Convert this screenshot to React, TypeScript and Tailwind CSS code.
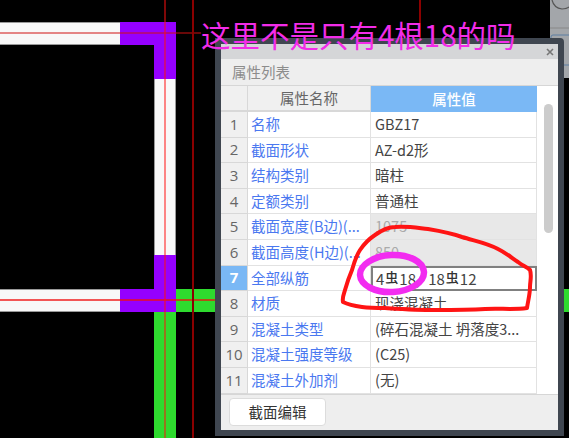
const rows = [
  { name: "名称", value: "GBZ17" },
  { name: "截面形状", value: "AZ-d2形" },
  { name: "结构类别", value: "暗柱" },
  { name: "定额类别", value: "普通柱" },
  { name: "截面宽度(B边)(...", value: "1075", muted: true },
  { name: "截面高度(H边)(...", value: "850", muted: true },
  { name: "全部纵筋", value: "", active: true },
  { name: "材质", value: "现浇混凝土" },
  { name: "混凝土类型", value: "(碎石混凝土 坍落度3..." },
  { name: "混凝土强度等级", value: "(C25)" },
  { name: "混凝土外加剂", value: "(无)" },
];

function Rebar() {
  return <span className="text-[13px] font-medium align-[3px] mx-px text-[#333]">虫</span>;
}

function Canvas() {
  return (
    <>
      {/* walls */}
      <div className="absolute inset-0 grid grid-cols-[120px_34px_22px_40px] grid-rows-[22px_23px_34px_176px_34px_23px_1fr]">
        <div className="col-start-1 row-start-2 bg-[#f8f8f8] border-y border-[#999]" />
        <div className="col-start-2 col-span-2 row-start-2 bg-[#9500ff]" />
        <div className="col-start-3 row-start-3 bg-[#9500ff]" />
        <div className="col-start-3 row-start-4 bg-[#f8f8f8] border-x border-[#999]" />
        <div className="col-start-3 row-start-5 bg-[#9500ff]" />
        <div className="col-start-1 row-start-6 bg-[#f8f8f8] border-y border-[#999]" />
        <div className="col-start-2 col-span-2 row-start-6 bg-[#9500ff]" />
        <div className="col-start-4 row-start-6 bg-[#2edb2e]" />
        <div className="col-start-3 row-start-7 bg-[#2edb2e]" />
      </div>
      <div className="absolute left-[564px] top-[289px] w-[5px] h-[23px] bg-[#2edb2e]" />

      {/* axis lines */}
      <div className="absolute left-0 top-[32px] w-[201px] h-[2px] bg-[#d01010]/50" />
      <div className="absolute left-0 top-[299px] w-[216px] h-[2px] bg-[#f01010]/70" />
      <div className="absolute left-[164px] top-0 w-[2px] h-[438px] bg-[#ff1010]/50" />
      <div className="absolute left-[192px] top-0 w-[2px] h-[438px] bg-[#8b0000]" />
      <div className="absolute left-[419px] top-0 w-[2px] h-[38px] bg-[#8b0000]" />

      {/* corner of the toolbar behind the dialog */}
      <div className="absolute left-[550px] top-0 w-[19px] h-[78px] bg-[#a3a6aa] overflow-hidden">
        <svg width="19" height="78" viewBox="0 0 19 78" fill="none">
          <path d="M2 0 Q4 8 12 9 Q17 9 19 7" stroke="#555" strokeWidth="1.2" />
          <path d="M0 28 H19" stroke="#888" strokeWidth="1" />
          <rect x="1" y="35" width="22" height="30" rx="2" stroke="#5d7ea3" strokeWidth="1" />
        </svg>
      </div>
    </>
  );
}

function PropertyDialog() {
  return (
    <div className="absolute left-[215px] top-[38px] w-[349px] h-[398px] border-[6px] border-[#3f4650] rounded-tr-sm flex flex-col bg-[#eeeeee] font-['Noto_Sans_CJK_SC',sans-serif]">
      <div className="h-[15px] bg-[#d5d6d8] flex items-center justify-end pr-[4px]">
        <svg width="8" height="8" viewBox="0 0 8 8" className="mt-[1px]">
          <path d="M1 1 L7 7 M7 1 L1 7" stroke="#777" strokeWidth="1.6" />
        </svg>
      </div>
      <div className="h-[26px] flex items-center pl-[11px] text-[14.5px] text-[#8c8c8c]">属性列表</div>

      <div className="bg-white border-y border-[#d6d6d6] flex">
        <div className="w-[316px]">
          <div className="grid grid-cols-[27px_123px_166px] h-[26px] text-[14.5px]">
            <div className="bg-[#f0f0f0] border-r border-b-2 border-[#d8d8d8]" />
            <div className="bg-[#f0f0f0] border-r border-b-2 border-[#d8d8d8] flex items-center justify-center text-[#666]">属性名称</div>
            <div className="bg-[#7ab8f5] flex items-center justify-center text-white font-medium">属性值</div>
          </div>
          {rows.map((row, i) => (
            <div key={row.name} className="grid grid-cols-[27px_123px_166px] h-[25.6px] text-[14.5px] leading-none">
              <div className={`border-r border-b border-[#d8d8d8] flex items-center justify-center text-[15px] font-['Open_Sans',sans-serif] ${row.active ? "bg-[#7ab8f5] text-white font-bold" : "bg-[#f0f0f0] text-[#666]"}`}>
                {i + 1}
              </div>
              <div className="border-r border-b border-[#e2e2e2] flex items-center pl-[3px] text-[#4a78f0] whitespace-nowrap overflow-hidden">
                {row.name}
              </div>
              {row.active ? (
                <div className="border-2 border-[#808080] flex items-center pl-[3px] text-[15px] text-[#444] whitespace-nowrap">
                  <span>4<Rebar />18,</span>
                  <span className="ml-[8px]">18<Rebar />12</span>
                </div>
              ) : (
                <div className={`border-r border-b border-[#e2e2e2] flex items-center pl-[4px] whitespace-nowrap overflow-hidden ${row.muted ? "bg-[#e8e8e8] text-[#aaaaaa]" : "text-[#444]"}`}>
                  {row.value}
                </div>
              )}
            </div>
          ))}
        </div>
        <div className="flex-1 pt-[18px] pl-[7px]">
          <div className="w-[9px] h-[129px] rounded-full bg-[#cccccc]" />
        </div>
      </div>

      <div className="flex-1 flex items-center pl-[8px]">
        <button className="w-[97px] h-[28px] bg-white border border-[#dcdcdc] rounded text-[14.5px] text-[#333]">截面编辑</button>
      </div>
    </div>
  );
}

export default function App() {
  return (
    <div className="relative w-[569px] h-[438px] overflow-hidden bg-black">
      <Canvas />
      <PropertyDialog />

      {/* hand drawn marks on top of the screenshot */}
      <svg className="absolute left-0 top-0" width="569" height="438" viewBox="0 0 569 438" fill="none">
        <path
          d="M375 235 C382 230 388 227 395 227 C408 226 418 228 428 229 C440 231 451 233 462 237 C475 241 487 243 498 249 C506 253 512 258 518 262 C523 266 527 267 530 270 C532 276 530 281 530 287 C530 294 528 301 527 308 C513 310 499 308 485 309 C468 310 452 310 435 310 C418 310 402 309 385 308 C377 308 370 308 362 307 C355 306 349 305 343 302 C342 297 344 294 345 290 C347 283 349 277 352 270 C354 263 356 256 360 250 C364 244 369 239 375 235 Z"
          stroke="#ff1414"
          strokeWidth="4"
          strokeLinejoin="round"
        />
        <ellipse cx="392" cy="273.5" rx="32" ry="18.5" stroke="#f22cf0" strokeWidth="6.5" transform="rotate(-3 392 273.5)" />
      </svg>
      <div className="absolute left-[201px] top-[14px] text-[29.5px] leading-[40px] font-normal whitespace-nowrap text-[#f22ce8] font-['Noto_Sans_CJK_SC',sans-serif]">
        这里不是只有4根18的吗
      </div>
    </div>
  );
}
